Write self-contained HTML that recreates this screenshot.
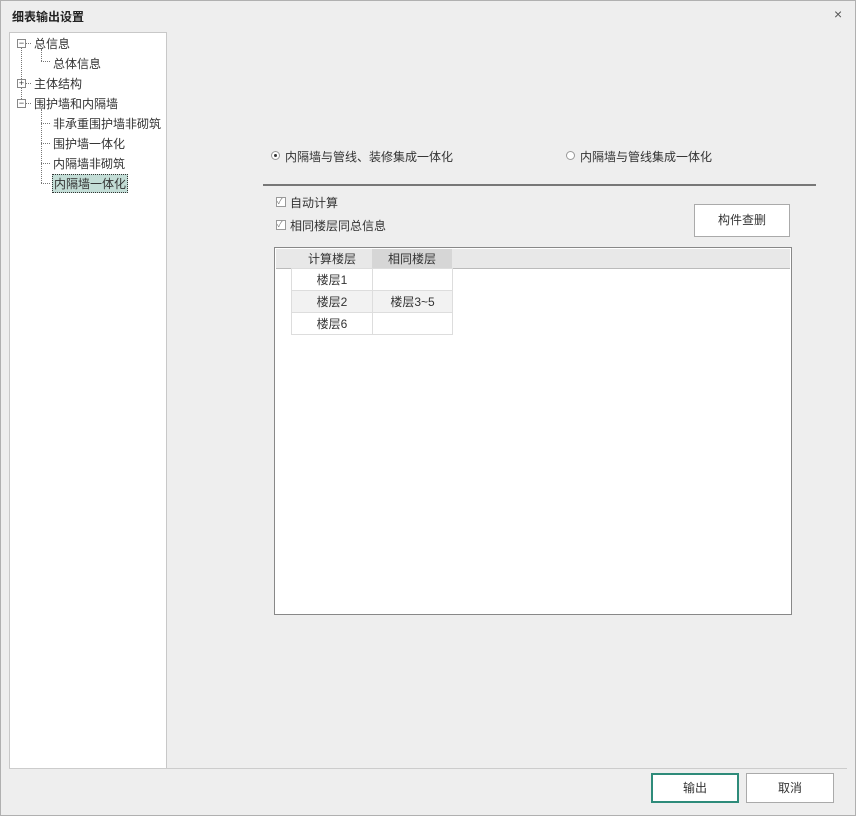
<!DOCTYPE html><html><head><meta charset="utf-8"><style>
*{margin:0;padding:0;box-sizing:border-box}
body{width:856px;height:816px;background:#eeeeee;font-family:"Liberation Sans","Noto Sans CJK SC",sans-serif;font-size:12px;color:#333;position:relative;overflow:hidden}
.a{position:absolute;white-space:nowrap}
.tree{position:absolute;left:9px;top:32px;width:158px;height:737px;background:#fff;border:1px solid #c8c8c8}
.box{position:absolute;width:9px;height:9px;border:1px solid #888;background:#fff;font-size:9px;line-height:7px;text-align:center;color:#333}
.dv{position:absolute;border-left:1px dotted #777}
.dh{position:absolute;border-top:1px dotted #777}
.btn{position:absolute;background:#fff;border:1px solid #aaa;text-align:center;font-size:12px}
td{border:1px solid #ddd;height:22px;text-align:center;font-size:12px}
</style></head><body>
<div class="a" style="left:0;top:0;width:856px;height:816px;border:1px solid #b0b0b0"></div>
<div class="a" style="left:12px;top:8px;font-size:12px;color:#222;font-weight:bold">细表输出设置</div>
<div class="a" style="left:834px;top:6px;font-size:14px;color:#555">×</div>
<div class="tree">
<div class="dv" style="left:11px;top:14px;height:56px"></div>
<div class="dv" style="left:31px;top:16px;height:12px"></div>
<div class="dh" style="left:31px;top:28px;width:9px"></div>
<div class="dv" style="left:31px;top:76px;height:74px"></div>
<div class="dh" style="left:31px;top:90px;width:9px"></div>
<div class="dh" style="left:31px;top:110px;width:9px"></div>
<div class="dh" style="left:31px;top:130px;width:9px"></div>
<div class="dh" style="left:31px;top:150px;width:9px"></div>
<div class="dh" style="left:15px;top:10px;width:6px"></div>
<div class="dh" style="left:15px;top:50px;width:6px"></div>
<div class="dh" style="left:15px;top:70px;width:6px"></div>
<div class="box" style="left:7px;top:6px">−</div>
<div class="box" style="left:7px;top:46px">+</div>
<div class="box" style="left:7px;top:66px">−</div>
<div class="a" style="left:24px;top:2px">总信息</div>
<div class="a" style="left:43px;top:22px">总体信息</div>
<div class="a" style="left:24px;top:42px">主体结构</div>
<div class="a" style="left:24px;top:62px">围护墙和内隔墙</div>
<div class="a" style="left:43px;top:82px">非承重围护墙非砌筑</div>
<div class="a" style="left:43px;top:102px">围护墙一体化</div>
<div class="a" style="left:43px;top:122px">内隔墙非砌筑</div>
<div class="a" style="left:42px;top:141px;background:#c3ddd6;border:1px dotted #333;padding:0 1px">内隔墙一体化</div>
</div>
<div class="a" style="left:271px;top:151px;width:9px;height:9px;border:1px solid #999;border-radius:50%;background:#fff"><div style="margin:2px;width:3px;height:3px;background:#333;border-radius:50%"></div></div>
<div class="a" style="left:285px;top:148px">内隔墙与管线、装修集成一体化</div>
<div class="a" style="left:566px;top:151px;width:9px;height:9px;border:1px solid #999;border-radius:50%;background:#fff"></div>
<div class="a" style="left:580px;top:148px">内隔墙与管线集成一体化</div>
<div class="a" style="left:263px;top:184px;width:553px;height:2px;background:#777"></div>
<div class="a" style="left:276px;top:197px;width:10px;height:10px;border:1px solid #999;background:#fff;font-size:8px;line-height:8px;color:#777">✓</div>
<div class="a" style="left:290px;top:194px">自动计算</div>
<div class="a" style="left:276px;top:220px;width:10px;height:10px;border:1px solid #999;background:#fff;font-size:8px;line-height:8px;color:#777">✓</div>
<div class="a" style="left:290px;top:217px">相同楼层同总信息</div>
<div class="btn" style="left:694px;top:204px;width:96px;height:33px;line-height:31px">构件查删</div>
<div class="a" style="left:274px;top:247px;width:518px;height:368px;background:#fff;border:1px solid #888">
<div class="a" style="left:1px;top:1px;width:514px;height:20px;background:#e8e8e8;border-bottom:1px solid #bbb"></div>
<div class="a" style="left:17px;top:1px;width:80px;height:20px;line-height:20px;text-align:center">计算楼层</div>
<div class="a" style="left:97px;top:1px;width:80px;height:20px;line-height:20px;text-align:center;background:#d6d6d6">相同楼层</div>
<div class="a" style="left:16px;top:21px;width:1px;height:66px;background:#999"></div>
<table style="position:absolute;left:16px;top:20px;border-collapse:collapse;width:162px">
<tr><td style="width:81px">楼层1</td><td></td></tr>
<tr style="background:#f2f2f2"><td>楼层2</td><td>楼层3~5</td></tr>
<tr><td>楼层6</td><td></td></tr></table>
</div>
<div class="a" style="left:9px;top:768px;width:838px;height:1px;background:#ccc"></div>
<div class="btn" style="left:651px;top:773px;width:88px;height:30px;line-height:26px;border:2px solid #2e8b7a">输出</div>
<div class="btn" style="left:746px;top:773px;width:88px;height:30px;line-height:28px">取消</div>
</body></html>
